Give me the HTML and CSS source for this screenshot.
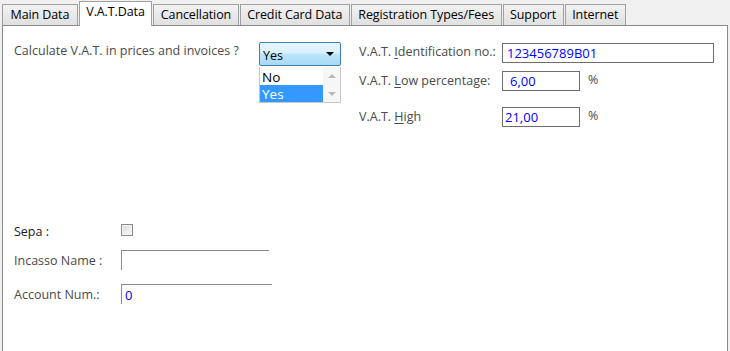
FILE: index.html
```html
<!DOCTYPE html>
<html lang="en">
<head>
    <meta charset="UTF-8">
    <title>Settings | V.A.T.Data</title>
    <link rel="stylesheet" href="styles.css">
</head>
<body>
    <div class="tabs">
        <div class="tab">Main Data</div>
        <div class="tab active">V.A.T.Data</div>
        <div class="tab">Cancellation</div>
        <div class="tab">Credit Card Data</div>
        <div class="tab">Registration Types/Fees</div>
        <div class="tab">Support</div>
        <div class="tab">Internet</div>
    </div>
    <div class="panel">
        <div class="top">
            <div class="calc">
                <span class="label">Calculate V.A.T. in prices and invoices ?</span>
                <div class="combo-wrap">
                    <div class="combo">
                        <span>Yes</span>
                        <span class="arrow"></span>
                    </div>
                    <div class="list">
                        <div class="items">
                            <div class="item">No</div>
                            <div class="item selected">Yes</div>
                        </div>
                        <div class="scroll">
                            <span class="up"></span>
                            <span class="down"></span>
                        </div>
                    </div>
                </div>
            </div>
            <div class="vat">
                <div class="row">
                    <span class="label vlabel">V.A.T. <u>I</u>dentification no.:</span>
                    <div class="field wide">123456789B01</div>
                </div>
                <div class="row">
                    <span class="label vlabel">V.A.T. <u>L</u>ow percentage:</span>
                    <div class="field small low">6,00</div>
                    <span class="label pct">%</span>
                </div>
                <div class="row high">
                    <span class="label vlabel">V.A.T. <u>H</u>igh</span>
                    <div class="field small">21,00</div>
                    <span class="label pct">%</span>
                </div>
            </div>
        </div>

        <div class="sepa">
            <div class="srow">
                <span class="label dark">Sepa :</span>
                <span class="check"></span>
            </div>
            <div class="srow">
                <span class="label">Incasso Name :</span>
                <div class="line-field"></div>
            </div>
            <div class="srow">
                <span class="label">Account Num.:</span>
                <div class="line-field acc">0</div>
            </div>
        </div>
    </div>
</body>
</html>
```

FILE: styles.css
```css
* {
    margin: 0;
    padding: 0;
    box-sizing: border-box;
}
body {
    width: 730px;
    height: 351px;
    overflow: hidden;
    background: #f0f0f0;
    font-family: 'Open Sans', 'Noto Sans', sans-serif;
    font-size: 12.5px;
    padding: 1px 0 0 2px;
}
.tabs {
    display: flex;
    align-items: flex-end;
    height: 24px;
    gap: 1px;
}
.tab {
    height: 21px;
    padding: 0 6.5px;
    line-height: 19px;
    border: 1px solid #a0a0a0;
    border-bottom: none;
    background: linear-gradient(#f2f2f2, #e0e0e0);
    color: #000;
    letter-spacing: -0.1px;
}
.tab:first-child {
    padding: 0 7.5px;
}
.tab.active {
    height: 25px;
    background: #fff;
    line-height: 20px;
    margin-bottom: -1px;
    position: relative;
    z-index: 1;
}
.panel {
    width: 726px;
    height: 330px;
    background: #fff;
    border: 1px solid #898989;
    border-bottom: none;
    padding: 16px 0 0 11px;
}
.label {
    color: #4a4a4a;
    line-height: 17px;
}
.label.dark {
    color: #1a1a1a;
}
.top {
    display: flex;
    height: 179px;
}
.calc {
    display: flex;
    width: 345px;
    align-items: flex-start;
}
.calc .label {
    width: 245px;
}
.combo-wrap {
    width: 82px;
}
.combo {
    height: 24px;
    border: 1px solid #3c7fb1;
    border-radius: 2px;
    background: linear-gradient(#eaf6fd 0%, #d9f0fc 45%, #bee6fd 50%, #a7d9f5 100%);
    display: flex;
    align-items: center;
    justify-content: space-between;
    padding: 3px 6px 0 3px;
    color: #000;
}
.arrow {
    width: 0;
    height: 0;
    border-left: 4px solid transparent;
    border-right: 4px solid transparent;
    border-top: 4px solid #000;
    margin-top: -3px;
}
.list {
    display: flex;
    height: 36px;
    border: 1px solid #c8c8c8;
    border-top: none;
    margin-top: 1px;
    background: #fff;
}
.items {
    width: 63px;
    padding-top: 1px;
}
.item {
    height: 17px;
    line-height: 19px;
    padding-left: 2px;
    font-size: 13.5px;
    color: #000;
}
.item.selected {
    background: #3399ff;
    color: #fff;
}
.scroll {
    flex: 1;
    display: flex;
    flex-direction: column;
    justify-content: space-between;
    align-items: center;
    padding: 7px 0 6px;
    background: #f6f6f6;
}
.up, .down {
    width: 0;
    height: 0;
    border-left: 4px solid transparent;
    border-right: 4px solid transparent;
}
.up {
    border-bottom: 4px solid #b8b8b8;
}
.down {
    border-top: 4px solid #b8b8b8;
}
.vat {
    display: flex;
    flex-direction: column;
    gap: 8px;
    padding-top: 1px;
}
.row {
    display: flex;
    align-items: flex-start;
    height: 20px;
}
.row + .row .vlabel {
    padding-top: 1px;
}
.row.high {
    margin-top: 8px;
}
.vlabel {
    width: 143px;
    white-space: nowrap;
}
.vlabel u {
    text-decoration: underline;
    text-underline-offset: 2px;
}
.field {
    height: 20px;
    border: 1px solid #6e6e6e;
    color: #0000ff;
    padding: 0 2px;
    line-height: 19px;
    font-size: 13px;
    background: #fff;
}
.wide {
    width: 212px;
    padding-left: 4px;
}
.small {
    width: 78px;
}
.low {
    padding-left: 7px;
}
.pct {
    margin-left: 8px;
}
.sepa {
    display: flex;
    flex-direction: column;
}
.srow {
    display: flex;
    align-items: center;
    height: 20px;
}
.srow + .srow {
    margin-top: 9px;
}
.srow:last-child {
    margin-top: 14px;
}
.srow .label {
    width: 107px;
}
.check {
    width: 12px;
    height: 12px;
    border: 1px solid #8a8a8a;
    background: linear-gradient(135deg, #dcdcdc, #fafafa);
    box-shadow: inset 0 0 0 1px #f4f4f4;
    margin-top: -3px;
}
.line-field {
    width: 148px;
    height: 20px;
    border-top: 1px solid #8a8a8a;
    border-left: 1px solid #8a8a8a;
    color: #0000ff;
    padding: 1px 0 0 3px;
    font-size: 13px;
    line-height: 18px;
}
.line-field.acc {
    width: 151px;
}
```
